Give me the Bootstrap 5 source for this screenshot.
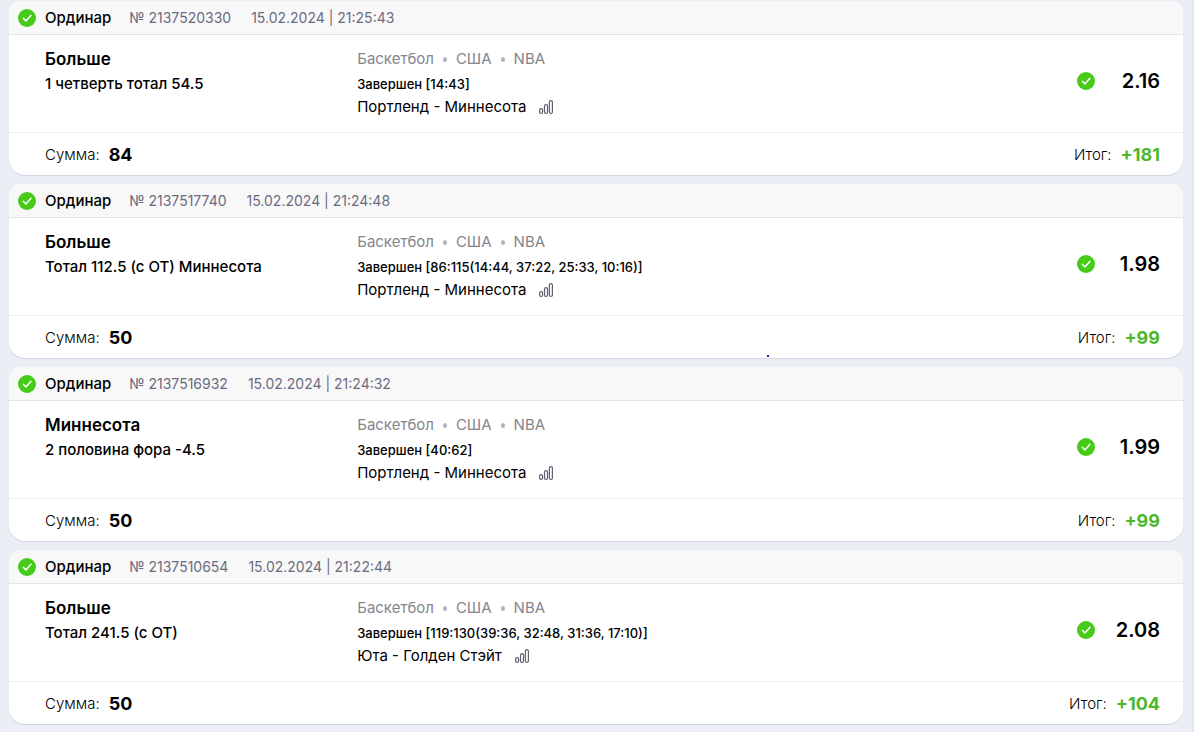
<!DOCTYPE html>
<html lang="ru">
<head>
<meta charset="utf-8">
<meta name="viewport" content="width=device-width, initial-scale=1">
<title>История ставок</title>
<link href="https://cdn.jsdelivr.net/npm/bootstrap@5.3.0/dist/css/bootstrap.min.css" rel="stylesheet">
<style>
body { font-family: Inter, "Liberation Sans", sans-serif; font-size: 15px; line-height: 20px; color: #000; background: #ebeff5; border-right: 2px solid #e2e6f0; min-height: 100vh; }
.bets { padding: 1px 9px 6px; gap: 9px; }
.bet { border-radius: 12px 12px 16px 16px; box-shadow: 0 1px 1px #cfd3e2; }
.bet-head { height: 34px; padding: 0 9px; background: #f8f8f8; border-bottom: 1px solid #e3e4ec; border-radius: 12px 12px 0 0; }
.bet-body { height: 98px; padding: 0 23px 0 36px; border-bottom: 1px solid #eceef3; }
.bet-foot { height: 42px; padding: 2px 23px 0 36px; font-weight: 300; }
.bet-kind { margin: 0 18px 0 9px; font-weight: 500; }
.bet-meta { font-size: 14px; color: #6b6b80; gap: 20px; }
.bet-pick { width: 28%; padding-top: 14px; }
.bet-event { padding-top: 14px; }
.pick-name { font-size: 17px; font-weight: 600; margin-bottom: 5px; }
.pick-text { font-weight: 500; }
.crumbs { color: #85858c; gap: 9px; margin-bottom: 5px; }
.crumbs i { width: 4px; height: 5px; border-radius: 50%; background: #b0b2bc; margin-top: 1px; }
.score { font-size: 13px; font-weight: 500; margin-bottom: 3px; }
.icon-check { width: 18px; height: 18px; }
.icon-stats { width: 14px; height: 14px; display: block; }
.btn-stats { margin-left: 13px; }
.odds { font-size: 20px; font-weight: 600; padding-bottom: 6px; }
.odds span { width: 65px; text-align: right; }
.amount { font-size: 18px; font-weight: 700; margin-left: 9px; }
.win { color: #4db82e; }
.caret-dot { position: absolute; left: 758px; top: 171px; width: 2px; height: 2px; background: #2222b8; }
</style>
</head>
<body>
<svg class="d-none" aria-hidden="true">
  <symbol id="check" viewBox="0 0 18 18"><circle cx="9" cy="9" r="9" fill="#46cb18"/><path d="M5.3 9.3 7.9 11.9 13 6.3" fill="none" stroke="#fff" stroke-width="1.5" stroke-linecap="round" stroke-linejoin="round"/></symbol>
  <symbol id="stats" viewBox="0 0 14 14"><g fill="none" stroke="#5f6072" stroke-width="1.2"><rect x=".6" y="8.6" width="3" height="4.8" rx="1.5"/><rect x="5.5" y="4.6" width="3" height="8.8" rx="1.5"/><rect x="10.4" y=".6" width="3" height="12.8" rx="1.5"/></g></symbol>
</svg>
<main class="bets d-flex flex-column">
  <article class="bet bg-white">
    <header class="bet-head d-flex align-items-center"><svg class="icon-check"><use href="#check"/></svg><span class="bet-kind">Ординар</span><div class="bet-meta d-flex"><span>№ 2137520330</span><span>15.02.2024 | 21:25:43</span></div></header>
    <div class="bet-body d-flex">
      <div class="bet-pick"><div class="pick-name">Больше</div><div class="pick-text">1 четверть тотал 54.5</div></div>
      <div class="bet-event flex-grow-1"><div class="crumbs d-flex align-items-center"><span>Баскетбол</span><i></i><span>США</span><i></i><span>NBA</span></div><div class="score">Завершен [14:43]</div><div class="d-flex align-items-center"><span>Портленд - Миннесота</span><button type="button" class="btn btn-stats p-0 border-0" aria-label="Статистика"><svg class="icon-stats"><use href="#stats"/></svg></button></div></div>
      <div class="odds d-flex align-items-center"><svg class="icon-check"><use href="#check"/></svg><span>2.16</span></div>
    </div>
    <footer class="bet-foot d-flex align-items-center justify-content-between"><div class="d-flex align-items-center">Сумма: <span class="amount">84</span></div><div class="d-flex align-items-center">Итог: <span class="amount win">+181</span></div></footer>
  </article>
  <article class="bet bg-white position-relative">
    <header class="bet-head d-flex align-items-center"><svg class="icon-check"><use href="#check"/></svg><span class="bet-kind">Ординар</span><div class="bet-meta d-flex"><span>№ 2137517740</span><span>15.02.2024 | 21:24:48</span></div></header>
    <div class="bet-body d-flex">
      <div class="bet-pick"><div class="pick-name">Больше</div><div class="pick-text">Тотал 112.5 (с ОТ) Миннесота</div></div>
      <div class="bet-event flex-grow-1"><div class="crumbs d-flex align-items-center"><span>Баскетбол</span><i></i><span>США</span><i></i><span>NBA</span></div><div class="score">Завершен [86:115(14:44, 37:22, 25:33, 10:16)]</div><div class="d-flex align-items-center"><span>Портленд - Миннесота</span><button type="button" class="btn btn-stats p-0 border-0" aria-label="Статистика"><svg class="icon-stats"><use href="#stats"/></svg></button></div></div>
      <div class="odds d-flex align-items-center"><svg class="icon-check"><use href="#check"/></svg><span>1.98</span></div>
    </div>
    <footer class="bet-foot d-flex align-items-center justify-content-between"><div class="d-flex align-items-center">Сумма: <span class="amount">50</span></div><div class="d-flex align-items-center">Итог: <span class="amount win">+99</span></div></footer>
    <span class="caret-dot"></span>
  </article>
  <article class="bet bg-white">
    <header class="bet-head d-flex align-items-center"><svg class="icon-check"><use href="#check"/></svg><span class="bet-kind">Ординар</span><div class="bet-meta d-flex"><span>№ 2137516932</span><span>15.02.2024 | 21:24:32</span></div></header>
    <div class="bet-body d-flex">
      <div class="bet-pick"><div class="pick-name">Миннесота</div><div class="pick-text">2 половина фора -4.5</div></div>
      <div class="bet-event flex-grow-1"><div class="crumbs d-flex align-items-center"><span>Баскетбол</span><i></i><span>США</span><i></i><span>NBA</span></div><div class="score">Завершен [40:62]</div><div class="d-flex align-items-center"><span>Портленд - Миннесота</span><button type="button" class="btn btn-stats p-0 border-0" aria-label="Статистика"><svg class="icon-stats"><use href="#stats"/></svg></button></div></div>
      <div class="odds d-flex align-items-center"><svg class="icon-check"><use href="#check"/></svg><span>1.99</span></div>
    </div>
    <footer class="bet-foot d-flex align-items-center justify-content-between"><div class="d-flex align-items-center">Сумма: <span class="amount">50</span></div><div class="d-flex align-items-center">Итог: <span class="amount win">+99</span></div></footer>
  </article>
  <article class="bet bg-white">
    <header class="bet-head d-flex align-items-center"><svg class="icon-check"><use href="#check"/></svg><span class="bet-kind">Ординар</span><div class="bet-meta d-flex"><span>№ 2137510654</span><span>15.02.2024 | 21:22:44</span></div></header>
    <div class="bet-body d-flex">
      <div class="bet-pick"><div class="pick-name">Больше</div><div class="pick-text">Тотал 241.5 (с ОТ)</div></div>
      <div class="bet-event flex-grow-1"><div class="crumbs d-flex align-items-center"><span>Баскетбол</span><i></i><span>США</span><i></i><span>NBA</span></div><div class="score">Завершен [119:130(39:36, 32:48, 31:36, 17:10)]</div><div class="d-flex align-items-center"><span>Юта - Голден Стэйт</span><button type="button" class="btn btn-stats p-0 border-0" aria-label="Статистика"><svg class="icon-stats"><use href="#stats"/></svg></button></div></div>
      <div class="odds d-flex align-items-center"><svg class="icon-check"><use href="#check"/></svg><span>2.08</span></div>
    </div>
    <footer class="bet-foot d-flex align-items-center justify-content-between"><div class="d-flex align-items-center">Сумма: <span class="amount">50</span></div><div class="d-flex align-items-center">Итог: <span class="amount win">+104</span></div></footer>
  </article>
</main>
<script src="https://cdn.jsdelivr.net/npm/bootstrap@5.3.0/dist/js/bootstrap.bundle.min.js"></script>
</body>
</html>
